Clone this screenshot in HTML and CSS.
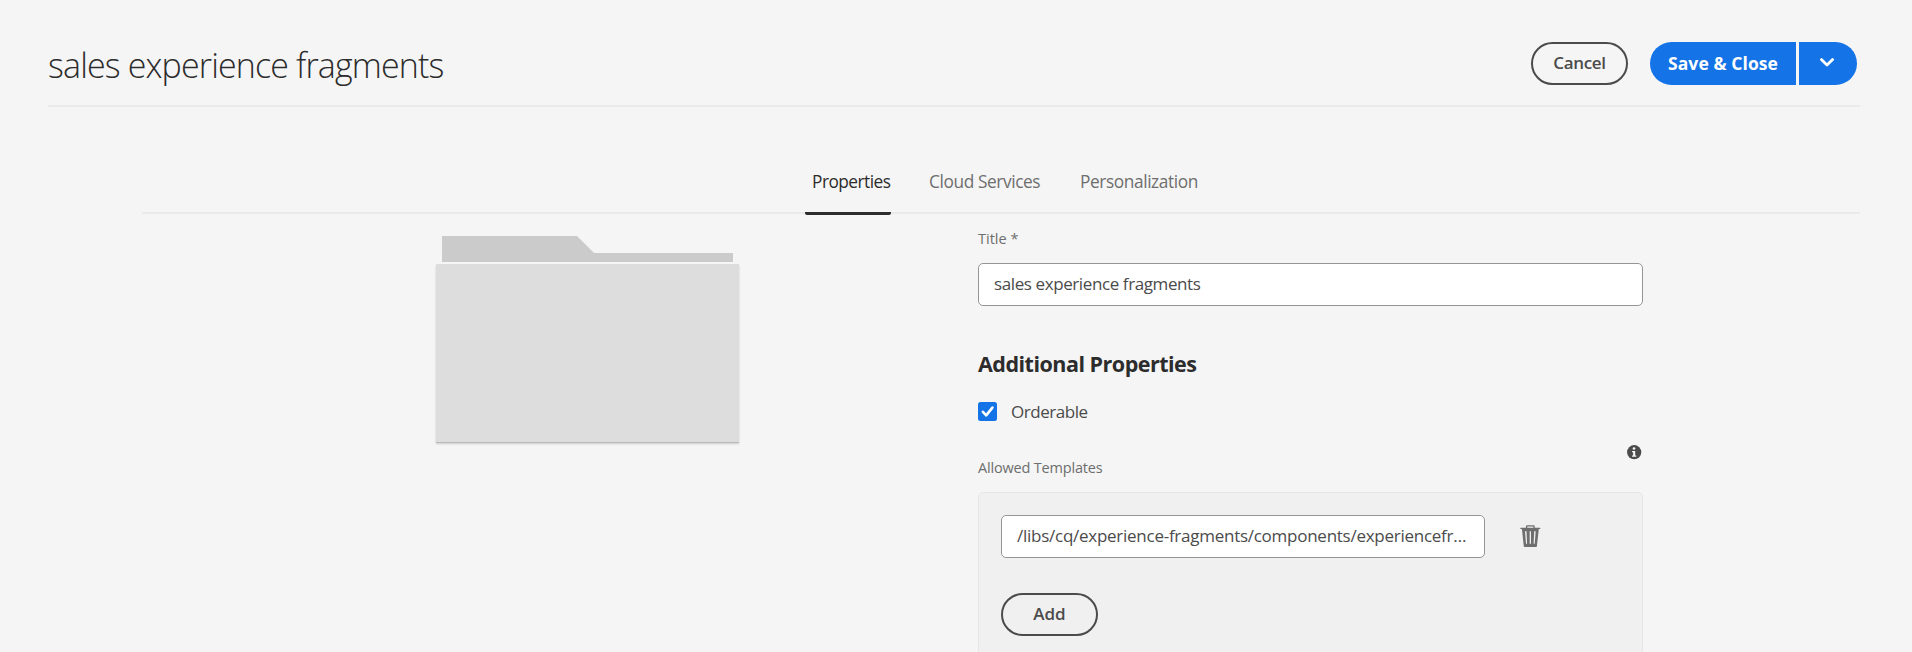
FILE: index.html
```html
<!DOCTYPE html>
<html lang="en">
<head>
<meta charset="utf-8">
<title>sales experience fragments</title>
<link rel="stylesheet" href="styles.css">
</head>
<body>
<header class="page-header">
  <h1 class="page-title">sales experience fragments</h1>
  <div class="actions">
    <button class="button button-cancel">Cancel</button>
    <div class="split">
      <button class="save">Save &amp; Close</button>
      <button class="more" aria-label="More">
        <svg width="16" height="12" viewBox="0 0 16 12"><path d="M2.4 1.6 L8 7 L13.6 1.6" fill="none" stroke="#fff" stroke-width="2.8" stroke-linecap="round" stroke-linejoin="round"/></svg>
      </button>
    </div>
  </div>
</header>
<nav class="tabs">
  <a class="tab tab-active">Properties</a>
  <a class="tab tab-cloud">Cloud Services</a>
  <a class="tab tab-person">Personalization</a>
</nav>
<main class="content">
  <div class="preview">
    <svg class="folder-tab" width="291" height="26" viewBox="0 0 291 26"><path d="M0 0H135L152 17H291V26H0Z" fill="#cbcbcb"/></svg>
    <div class="folder-body"></div>
  </div>
  <form class="form">
    <label class="label label-title">Title *</label>
    <div class="input input-title">sales experience fragments</div>
    <h2 class="section">Additional Properties</h2>
    <label class="check">
      <svg width="19" height="19" viewBox="0 0 19 19"><rect width="19" height="19" rx="2.5" fill="#1473e6"/><path d="M4.9 9.8 L8.2 13.4 L14.4 5.6" fill="none" stroke="#fff" stroke-width="2.6" stroke-linecap="round" stroke-linejoin="round"/></svg>
      <span class="check-text">Orderable</span>
    </label>
    <div class="templates-head">
      <label class="label label-templates">Allowed Templates</label>
      <svg class="info" width="15" height="15" viewBox="0 0 15 15"><circle cx="7.2" cy="7.2" r="7.1" fill="#4b4b4b"/><circle cx="7" cy="3.5" r="1.35" fill="#f5f5f5"/><path d="M5 5.9H8.2V10.5H9.3V11.8H5V10.5H6.1V7.2H5Z" fill="#f5f5f5"/></svg>
    </div>
    <div class="panel">
      <div class="row">
        <div class="input input-path">/libs/cq/experience-fragments/components/experiencefr…</div>
        <svg class="trash" width="21" height="22" viewBox="0 0 21 22"><path d="M6.6 3V1.4Q6.6 .9 7.1 .9H13.6Q14.1 .9 14.1 1.4V3" fill="none" stroke="#6e6e6e" stroke-width="1.3"/><path fill="#6e6e6e" fill-rule="evenodd" d="M.9 2.8H19.8Q20.4 2.8 20.4 3.4T19.8 4.1H18.8L16.9 21.3Q16.8 21.9 16.2 21.9H4.5Q3.9 21.9 3.8 21.3L1.9 4.1H.9Q.3 4.1 .3 3.4T.9 2.8Z M5 6.2L6 18.8H7.1L6.5 6.2Z M9.7 6.2V18.8H11V6.2Z M14.2 6.2L13.6 18.8H14.7L15.7 6.2Z"/></svg>
      </div>
      <button type="button" class="button button-add">Add</button>
    </div>
  </form>
</main>
</body>
</html>
```
FILE: styles.css
```css
* { box-sizing: border-box; }
body {
  display: flex;
  flex-direction: column;
  height: 100vh;
  margin: 0;
  background: #f5f5f5;
  color: #4b4b4b;
  font: 17px/24px "Open Sans", "Noto Sans", sans-serif;
  white-space: nowrap;
}
button { font: inherit; margin: 0; padding: 0; }
.page-header {
  display: flex;
  justify-content: space-between;
  height: 107px;
  margin: 0 52px 0 48px;
  padding: 42px 3px 0 0;
  border-bottom: 2px solid #eaeaea;
}
.page-title { margin: 0; font-size: 34px; line-height: 46px; font-weight: 300; letter-spacing: -.86px; color: #2c2c2c; }
.actions { display: flex; gap: 22px; }
.button {
  width: 97px;
  height: 43px;
  border: 2px solid #4b4b4b;
  border-radius: 22px;
  background: transparent;
  color: #4b4b4b;
  font-weight: 600;
}
.button-cancel { padding-bottom: 2px; letter-spacing: -.3px; }
.split { display: flex; gap: 3px; }
.save, .more { height: 43px; border: 0; background: #1473e6; color: #fff; font-weight: 700; }
.save { width: 146px; border-radius: 22px 0 0 22px; text-align: left; padding: 0 0 2px 18px; font-size: 17.5px; letter-spacing: .08px; }
.more { width: 58px; border-radius: 0 22px 22px 0; display: flex; align-items: center; padding-left: 20px; }
.tabs {
  display: flex;
  height: 107px;
  margin: 0 52px 0 142px;
  padding: 63px 0 0 663px;
  border-bottom: 2px solid #eaeaea;
  color: #6e6e6e;
  font-size: 17.3px;
  letter-spacing: -.4px;
}
.tab { height: 45px; }
.tab-active { width: 86px; padding-left: 7px; border-bottom: 3px solid #2c2c2c; border-radius: 2px; color: #2c2c2c; letter-spacing: -.52px; }
.tab-cloud { width: 151px; margin-left: 38px; }
.content { display: flex; flex: 1; min-height: 0; }
.preview { width: 542px; margin-left: 436px; padding-top: 22px; }
.folder-tab { display: block; margin-left: 6px; }
.folder-body { width: 303px; height: 178px; margin-top: 2px; background: #ddd; box-shadow: 0 1px 0 #b8b8b8, 0 2px 2px rgba(0,0,0,.16); }
.form { display: flex; flex-direction: column; width: 665px; }
.label { display: block; font-size: 14.5px; line-height: 20px; color: #6e6e6e; }
.label-title { padding-top: 15px; height: 49px; }
.input {
  height: 43px;
  padding: 8px 15px;
  border: 1px solid #959595;
  border-radius: 5px;
  background: #fff;
  letter-spacing: -.4px;
}
.section { margin: 43px 0 0; font-size: 21.5px; line-height: 30px; font-weight: 700; letter-spacing: -.5px; color: #2c2c2c; }
.check { display: flex; align-items: center; gap: 14px; height: 24px; margin-top: 20px; letter-spacing: -.45px; }
.check-text { padding-top: 2px; }
.templates-head { display: flex; justify-content: space-between; height: 69px; padding: 22px 1px 0 0; }
.label-templates { padding-top: 13px; letter-spacing: -.18px; }
.panel { flex: 1; min-height: 0; padding: 22px; border: 1px solid #e6e6e6; border-bottom: 0; border-radius: 5px 5px 0 0; background: #f0f0f0; }
.row { display: flex; gap: 35px; }
.input-path { width: 484px; letter-spacing: -.26px; }
.trash { margin-top: 10px; }
.button-add { display: block; margin-top: 35px; padding-bottom: 2px; }
```
